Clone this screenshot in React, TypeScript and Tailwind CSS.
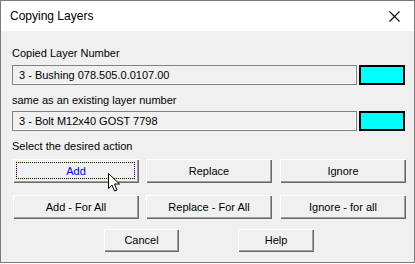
import React from 'react'

const btn =
  'relative flex items-center justify-center bg-[#f0f0f0] text-[11px] text-black shadow-[inset_1px_1px_0_#ffffff,inset_-1px_-1px_0_#696969,inset_-2px_-2px_0_#a0a0a0]'

function Field({ value }: { value: string }) {
  return (
    <div className="flex gap-[2px] h-[20px]">
      <div className="w-[345px] h-full flex items-center pl-[6px] border border-[#828282] shadow-[inset_-1px_-1px_0_#ffffff] bg-[#f0f0f0] text-[11px] text-black">
        {value}
      </div>
      <div className="w-[46px] h-full bg-[#00ffff] border-2 border-black" />
    </div>
  )
}

export default function App() {
  return (
    <div
      className="relative w-[415px] h-[263px] border border-[#7a7a7a] bg-[#f0f0f0] flex flex-col overflow-hidden"
      style={{ fontFamily: '"Liberation Sans", Arial, sans-serif' }}
    >
      {/* title bar */}
      <div className="h-[30px] bg-white flex items-center justify-between pl-[9px] pr-[14px] shrink-0">
        <span className="text-[12px] text-black">Copying Layers</span>
        <svg width="11" height="11" viewBox="0 0 11 11" className="text-black">
          <path d="M0.5 0.5 L10.5 10.5 M10.5 0.5 L0.5 10.5" stroke="currentColor" strokeWidth="1.1" />
        </svg>
      </div>

      <div className="flex flex-col pl-[11px] pt-[16px]">
        <div className="text-[11px] text-black leading-[13px] h-[13px]">Copied Layer Number</div>
        <div className="mt-[5px]">
          <Field value="3 - Bushing 078.505.0.0107.00" />
        </div>
        <div className="mt-[9px] text-[11px] text-black leading-[13px] h-[13px]">same as an existing layer number</div>
        <div className="mt-[4px]">
          <Field value="3 - Bolt M12x40 GOST 7798" />
        </div>
        <div className="mt-[9px] text-[11px] text-black leading-[13px] h-[13px]">Select the desired action</div>

        <div className="mt-[6px] flex gap-[7px] pl-[1px]">
          <button className={`${btn} w-[126px] h-[24px] shadow-[inset_1px_1px_0_#ffffff,inset_-1px_-1px_0_#696969,inset_-2px_-2px_0_#696969]`}>
            <span className="absolute left-[3px] top-[3px] right-[4px] bottom-[4px] border border-[#ffff00]" />
            <span className="absolute left-[3px] top-[3px] right-[4px] bottom-[4px] border border-dotted border-black" />
            <span className="relative text-[#0000ff]">Add</span>
          </button>
          <button className={`${btn} w-[126px] h-[24px]`}>Replace</button>
          <button className={`${btn} w-[126px] h-[24px] ml-[1px]`}>Ignore</button>
        </div>

        <div className="mt-[12px] flex gap-[7px] pl-[1px]">
          <button className={`${btn} w-[126px] h-[24px]`}>Add - For All</button>
          <button className={`${btn} w-[126px] h-[24px]`}>Replace - For All</button>
          <button className={`${btn} w-[126px] h-[24px] ml-[1px]`}>Ignore - for all</button>
        </div>

        <div className="mt-[10px] flex pl-[92px] gap-[59px]">
          <button className={`${btn} w-[75px] h-[23px]`}>Cancel</button>
          <button className={`${btn} w-[76px] h-[23px]`}>Help</button>
        </div>
      </div>

      {/* mouse pointer */}
      <svg width="13" height="20" viewBox="0 0 13 20" className="absolute left-[107px] top-[172px]">
        <path
          d="M0.5 0.5 L0.5 15.5 L4 12 L6.5 18 L9 17 L6.5 11 L11.5 11 Z"
          fill="#ffffff"
          stroke="#000000"
          strokeWidth="1"
          strokeLinejoin="miter"
        />
      </svg>
    </div>
  )
}
